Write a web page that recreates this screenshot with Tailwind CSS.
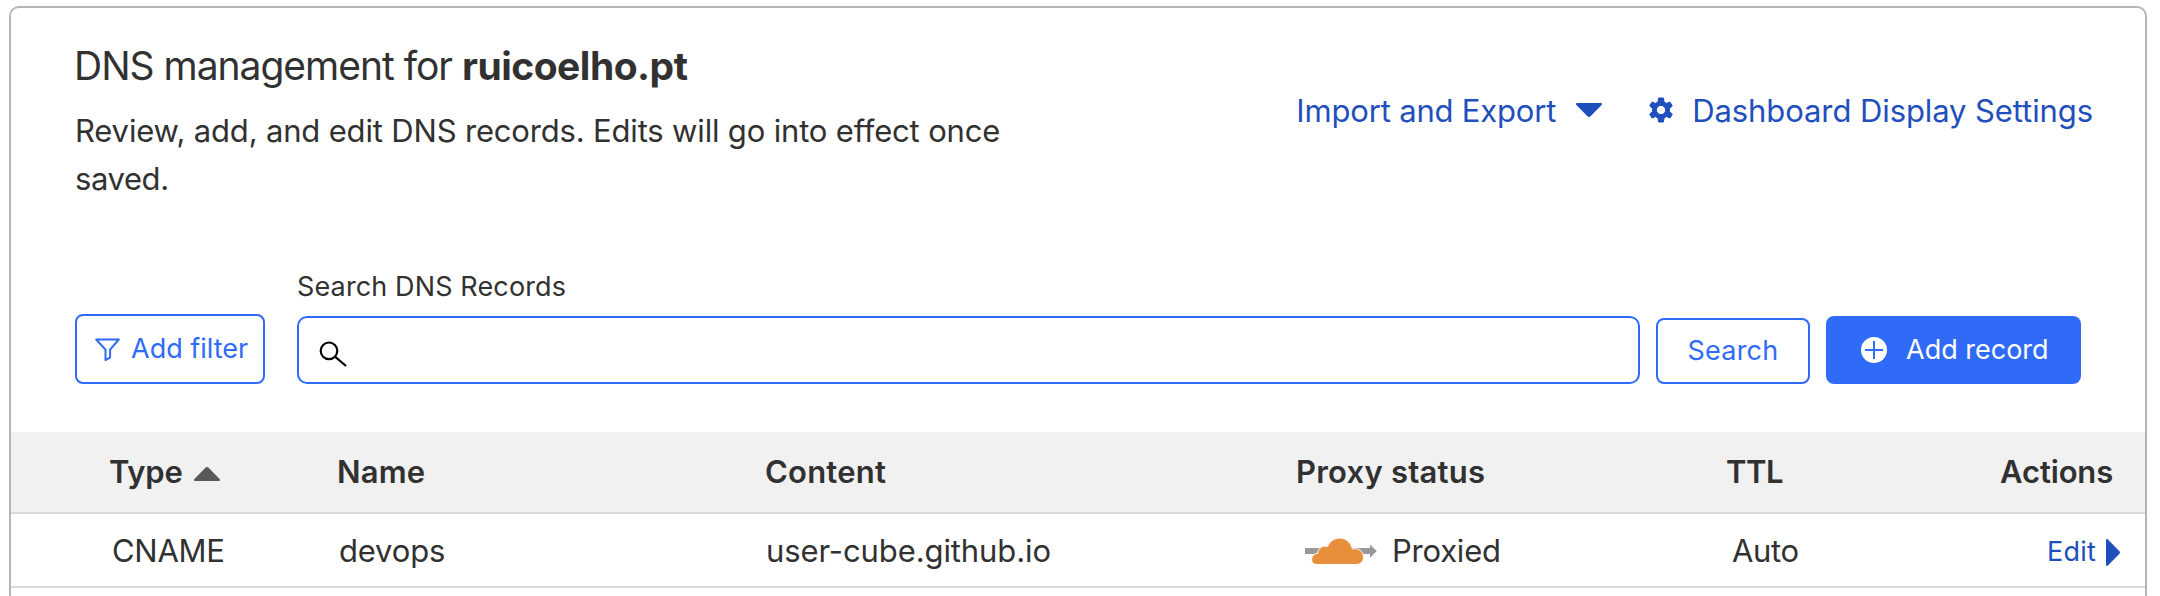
<!DOCTYPE html>
<html lang="en">
<head>
<meta charset="utf-8">
<title>DNS management</title>
<script src="https://cdn.jsdelivr.net/npm/@tailwindcss/browser@4"></script>
</head>
<body class="h-[596px] overflow-hidden bg-white pt-[6px] pl-[9px] font-['Inter',sans-serif] text-[31px] text-[#313131]">
<main class="h-[590px] w-[2138px] overflow-hidden rounded-t-[10px] border-2 border-b-0 border-[#b5b5b5]">
  <header class="flex items-start justify-between pt-[34px] pl-[64px] pr-[52px]">
    <div class="w-[960px]">
      <h1 class="whitespace-nowrap text-[39px] leading-[48px] tracking-[-1.01px]"><span class="-ml-px inline-block w-[388px]">DNS management for</span><strong class="font-bold tracking-[-0.5px]">ruicoelho.pt</strong></h1>
      <p class="mt-[17px] leading-[48px] tracking-[-0.17px]">Review, add, and edit DNS records. Edits will go into effect once<br><span class="tracking-[-0.4px]">saved.</span></p>
    </div>
    <nav class="mt-[45px] flex items-center leading-[48px] text-[#1f4fbd]">
      <a class="flex items-center tracking-[-0.18px]">Import and Export
        <svg class="ml-[20px] h-[14px] w-[26px] -translate-y-px" viewBox="0 0 26 14" fill="currentColor"><path d="M1.2 0h23.6c1.1 0 1.6 1.1.8 1.9L14.6 13.2c-.9 1-2.3 1-3.2 0L.4 1.9C-.4 1.1.1 0 1.2 0z"/></svg>
      </a>
      <a class="ml-[47px] flex items-center tracking-[-0.09px]">
        <svg class="mr-[19px] h-[26px] w-[24px] -translate-y-px" viewBox="0 0 24 26" fill="currentColor" fill-rule="evenodd"><path stroke="currentColor" stroke-width="1" stroke-linejoin="round" d="M9.600 1h4.800l.6 3.900a8.800 8.800 0 0 1 2.500 1.500l3.500-1.400 2.300 4-2.900 2.300a8.800 8.800 0 0 1 0 3.400l2.900 2.300-2.300 4-3.500-1.400a8.800 8.800 0 0 1-2.500 1.500l-.6 3.900H9.600L9 21.100a8.800 8.800 0 0 1-2.500-1.500L3 21 .7 17l2.900-2.300a8.800 8.800 0 0 1 0-3.400L.7 9 3 5l3.500 1.400A8.800 8.800 0 0 1 9 4.900zM12 8.400a4.600 4.600 0 1 0 0 9.200 4.600 4.600 0 0 0 0-9.200z"/></svg>
        Dashboard Display Settings
      </a>
    </nav>
  </header>

  <section class="mt-[64px] flex items-end pb-[48px] pl-[64px] text-[27px] text-[#2f6bf8]">
    <button class="flex h-[70px] w-[190px] items-center whitespace-nowrap rounded-[8px] border-2 border-[#2f6bf8] pl-[18px]">
      <svg class="mr-[11px] h-[23px] w-[25px]" viewBox="0 0 25 23" fill="none" stroke="currentColor" stroke-width="2" stroke-linejoin="round"><path d="M1.200 1.500h22.600l-8.700 10.200v8L10.500 22V11.700z"/></svg>
      Add filter
    </button>
    <div class="ml-[32px] w-[1343px]">
      <label class="block leading-[40px] tracking-[0.13px] text-[#313131]">Search DNS Records</label>
      <div class="mt-[9px] flex h-[68px] items-center rounded-[10px] border-2 border-[#2f6bf8] pl-[20px]">
        <svg class="mt-[7px] h-[26px] w-[28px]" viewBox="0 0 28 26" fill="none" stroke="#000" stroke-width="2.200"><circle cx="10" cy="9.800" r="8.300"/><path d="M16 15.600l11 9.400"/></svg>
      </div>
    </div>
    <button class="ml-[16px] flex h-[66px] w-[154px] items-center justify-center rounded-[8px] border-2 border-[#2f6bf8] tracking-[0.21px]">Search</button>
    <button class="ml-[16px] flex h-[68px] w-[255px] items-center rounded-[8px] bg-[#306bf8] pl-[35px] text-white">
      <svg class="mr-[19px] h-[26px] w-[26px]" viewBox="0 0 26 26"><circle cx="13" cy="13" r="13" fill="#fff"/><path d="M4 13h18M13 4v18" stroke="#306bf8" stroke-width="2"/></svg>
      Add record
    </button>
  </section>

  <div class="grid h-[82px] grid-cols-[228px_428px_531px_430px_200px_187px] items-center border-b-2 border-[#d9d9d9] bg-[#f1f1f1] pl-[98px] font-semibold">
    <div class="flex items-center tracking-[-0.2px]">Type
      <svg class="ml-[11px] mt-[3px] h-[14px] w-[26px]" viewBox="0 0 26 14" fill="#595959"><path d="M1.200 14h23.600c1.100 0 1.600-1.100.8-1.900L14.600.8c-.9-1-2.300-1-3.200 0L.4 12.100c-.8.8-.3 1.900.8 1.900z"/></svg>
    </div>
    <div class="tracking-[0.15px]">Name</div>
    <div class="tracking-[0.23px]">Content</div>
    <div class="tracking-[0.24px]">Proxy status</div>
    <div class="tracking-[-0.46px]">TTL</div>
    <div class="text-right tracking-[-0.17px]">Actions</div>
  </div>

  <div class="grid h-[74px] grid-cols-[227px_427px_531px_435px_200px_188px] items-center border-b-2 border-[#d9d9d9] pt-[2px] pl-[101px]">
    <div class="tracking-[-0.3px]">CNAME</div>
    <div class="tracking-[-0.17px]">devops</div>
    <div class="tracking-[-0.1px]">user-cube.github.io</div>
    <div class="flex items-center pl-[8px] tracking-[-0.23px]">
      <svg class="mr-[15px] h-[28px] w-[72px]" viewBox="0 0 72 28"><path d="M0 11h65V7.500l6.800 6.500-6.800 6.700V17H0z" fill="#999"/><path d="M12 27.500c-6-.5-6.300-10.500 1.800-11.300.2-5.500 5.600-8.400 9.800-6.600 4.300-11.500 21-12 24.900 2.400 6-1.500 11 2.300 11 8 0 4.600-3 7.500-7.500 7.500z" transform="translate(-1)" fill="#e88f3c" stroke="#fff" stroke-width="1"/></svg>
      Proxied
    </div>
    <div class="tracking-[-0.35px]">Auto</div>
    <div class="flex items-center justify-end pt-[2px] text-[27px] tracking-[0.23px] text-[#1f4fbd]">Edit
      <svg class="ml-[10px] h-[27px] w-[14px]" viewBox="0 0 14 27" fill="currentColor"><path d="M0 1.200C0 .1 1.100-.4 1.900.4l11.300 11.500c1 .9 1 2.300 0 3.200L1.900 26.600c-.8.8-1.900.3-1.900-.8z"/></svg>
    </div>
  </div>
</main>
</body>
</html>
